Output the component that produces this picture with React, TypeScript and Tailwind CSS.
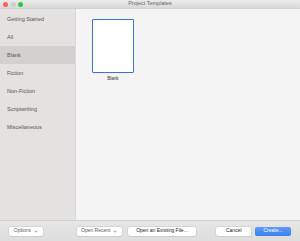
import React from "react";

const items = ["Getting Started", "All", "Blank", "Fiction", "Non-Fiction", "Scriptwriting", "Miscellaneous"];

function Btn({ children, className = "" }: { children: React.ReactNode; className?: string }) {
  return (
    <div
      className={`h-[9px] flex items-center justify-center rounded-[2px] bg-white text-[5px] text-[#5a5a5a] shadow-[0_0_0_0.5px_#c8c8c8,0_0.5px_0.5px_#bbb] ${className}`}
    >
      {children}
    </div>
  );
}

function Chev() {
  return (
    <svg width="4" height="3" viewBox="0 0 4 3" className="ml-[3px]">
      <path d="M0.5 0.7 L2 2.2 L3.5 0.7" stroke="#777" strokeWidth="0.7" fill="none" />
    </svg>
  );
}

export default function App() {
  return (
    <div
      className="w-[300px] h-[241px] flex flex-col bg-[#f4f4f4] overflow-hidden"
      style={{ fontFamily: '"Liberation Sans", Arial, sans-serif' }}
    >
      <div className="h-[9px] relative flex items-center justify-center bg-gradient-to-b from-[#ebebeb] to-[#d9d9d9] border-b border-[#cfcfcf]">
        <div className="absolute left-[3px] top-[2px] flex gap-[2.5px]">
          <div className="w-[5px] h-[5px] rounded-full bg-[#fc5f57]" />
          <div className="w-[5px] h-[5px] rounded-full bg-[#d0d0d0]" />
          <div className="w-[5px] h-[5px] rounded-full bg-[#2ac840]" />
        </div>
        <span className="text-[5.5px] text-[#666] leading-none">Project Templates</span>
      </div>
      <div className="flex flex-1 min-h-0">
        <div className="w-[76px] bg-[#e4e2e0] border-r border-[#d9d9d9] pt-[1px] flex flex-col">
          {items.map((it) => (
            <div
              key={it}
              className={`h-[18px] flex items-center pl-[7px] text-[5.5px] text-[#555] ${it === "Blank" ? "bg-[#d3d1cf]" : ""}`}
            >
              {it}
            </div>
          ))}
        </div>
        <div className="flex-1 bg-[#f4f4f4] pl-[16px] pt-[10px]">
          <div className="w-[42px] flex flex-col items-center">
            <div className="w-[42px] h-[54px] bg-white border-[1.5px] border-[#3e6fdc] rounded-[1px]" />
            <div className="mt-[4px] text-[4.5px] text-[#333] leading-none">Blank</div>
          </div>
        </div>
      </div>
      <div className="h-[21px] bg-gradient-to-b from-[#e6e6e6] to-[#dddddd] border-t border-[#d2d2d2] flex items-center px-[9px]">
        <Btn className="w-[34px]">
          Options
          <Chev />
        </Btn>
        <Btn className="w-[45px] ml-[34px]">
          Open Recent
          <Chev />
        </Btn>
        <Btn className="w-[69px] ml-[6px] text-[#222]">Open an Existing File...</Btn>
        <Btn className="w-[35px] ml-[20px] text-[#222]">Cancel</Btn>
        <div className="w-[36px] h-[9px] ml-[4px] flex items-center justify-center rounded-[2px] bg-gradient-to-b from-[#5e9bf7] to-[#3a7ff0] text-[5px] text-white">
          Create...
        </div>
      </div>
    </div>
  );
}
